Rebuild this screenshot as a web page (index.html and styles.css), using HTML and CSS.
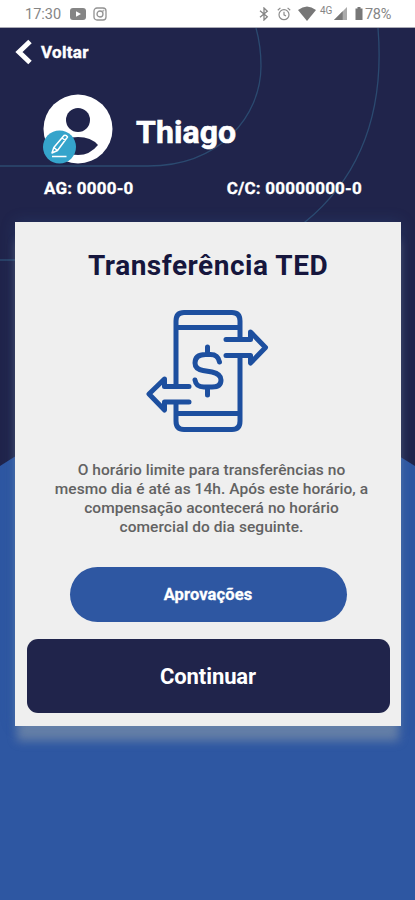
FILE: index.html
```html
<!DOCTYPE html>
<html lang="pt-BR">
<head>
<meta charset="utf-8">
<meta name="viewport" content="width=device-width, initial-scale=1">
<title>Transferência TED</title>
<link rel="stylesheet" href="styles.css">
</head>
<body>
<div class="status">
  <span class="time">17:30</span>
  <svg class="yt" width="16" height="12" viewBox="0 0 16 12"><rect width="16" height="12" rx="3" fill="#858585"/><path d="M6 3.2v5.6L11 6z" fill="#fff"/></svg>
  <svg class="ig" width="14" height="14" viewBox="0 0 14 14" fill="none" stroke="#929292" stroke-width="1.3"><rect x="1" y="1" width="12" height="12" rx="3"/><circle cx="7" cy="7" r="3"/><circle cx="10.4" cy="3.6" r=".3"/></svg>
  <svg class="bt" width="10" height="14" viewBox="0 0 10 14" fill="none" stroke="#858585" stroke-width="1.3"><path d="M1 3.8l7.3 6L5 13V1l3.3 3.2L1 10.2"/></svg>
  <svg class="alarm" width="14" height="14" viewBox="0 0 14 14" fill="none" stroke="#8c8c8c" stroke-width="1.2"><circle cx="7" cy="7.7" r="5"/><path d="M7 4.8v3l2 1.3M.8 3.2l2.6-2.3M13.2 3.2L10.6.9"/></svg>
  <svg class="wifi" width="18" height="15" viewBox="0 0 18 15"><path d="M0 4Q9-3 18 4L9 15z" fill="#777"/></svg>
  <span class="net">4G</span>
  <svg class="signal" width="13" height="13" viewBox="0 0 13 13"><path d="M0 13L13 0v13z" fill="#aaa"/><path d="M0 13L8.700 4.300V13z" fill="#777"/></svg>
  <svg class="battery" width="8" height="13" viewBox="0 0 8 13"><path d="M.5 1.500h2V0h3v1.500h2V13h-7z" fill="#777"/></svg>
  <span class="percent">78%</span>
</div>
<main class="screen">
  <svg class="backdrop" width="415" height="872" viewBox="0 28 415 872">
    <path d="M0 466Q208 330 415 466V900H0z" fill="#2e57a2"/>
    <g fill="none" stroke="#2b4a70" stroke-width="1.300">
      <path d="M0 166H148C220 166 261 116 261 66Q261 46 256 28"/>
      <path d="M0 260H190C240 260 274 248 305 222C360 177 385 114 378 28"/>
    </g>
  </svg>
  <header class="top">
    <a class="back">
      <svg width="18" height="26" viewBox="0 0 18 26"><path d="M16 2.500L5 13L16 23.500" fill="none" stroke="#fff" stroke-width="5"/></svg>
      <span class="back-label">Voltar</span>
    </a>
    <div class="profile">
      <svg class="avatar" width="70" height="71" viewBox="0 0 70 71">
        <circle cx="35" cy="35" r="34.500" fill="#fff"/>
        <circle cx="35" cy="26" r="12" fill="#20244b"/>
        <path d="M15 51Q22 43 35 43Q48 43 55 51Q47 61 35 61Q22 61 15 51z" fill="#20244b"/>
        <circle cx="16.500" cy="53" r="16.500" fill="#35a4cb"/>
        <g fill="none" stroke="#fff" stroke-width="1.500" stroke-linejoin="round"><path d="M9 59l1.800-5.500L21 41.500Q23 40.500 24.500 43L14.500 56.500zM10.800 53.500l3.700 3M19 44l3.500 2.500M9 62.500h14.500"/></g>
      </svg>
      <h1 class="name">Thiago</h1>
    </div>
    <div class="account"><span class="agency">AG: 0000-0</span><span class="number">C/C: 00000000-0</span></div>
  </header>
  <section class="card">
    <h2 class="title">Transferência TED</h2>
    <svg class="transfer" width="124" height="124" viewBox="0 0 124 124" fill="none" stroke="#1d4f9f" stroke-width="5" stroke-linecap="round" stroke-linejoin="round">
      <path d="M31 77V12Q31 3.500 39 3.500H87Q95 3.500 95 12V30M95 48V112Q95 120.500 87 120.500H39Q31 120.500 31 112V95M31 18.500H95M31 104.500H95"/>
      <path d="M81 30.500H105.500V23L120.500 38.500L105.500 54V46.500H81M44 77.500H19.500V70L4 85L19.500 101V93H44"/>
      <path d="M62.500 38V45M62.500 79V86M74.500 53Q73 45.500 65.500 45.500H60.500Q50 45.500 50 54Q50 60 58 61.500L67 63Q76 65 76 71Q76 78 67 78H59Q51 78 50 71" stroke-width="5"/>
    </svg>
    <p class="notice">
      <span class="l1">O horário limite para transferências no</span>
      <span class="l2">mesmo dia é até as 14h. Após este horário, a</span>
      <span class="l3">compensação acontecerá no horário</span>
      <span class="l4">comercial do dia seguinte.</span>
    </p>
    <button class="approve">Aprovações</button>
    <button class="next">Continuar</button>
  </section>
</main>
</body>
</html>
```
FILE: styles.css
```css
* { box-sizing: border-box; }
body { margin: 0; width: 415px; height: 900px; overflow: hidden; font-family: Roboto, "Liberation Sans", sans-serif; background: #20244b; }
h1, h2, p { margin: 0; }
svg { display: block; flex: none; }
.status { display: flex; align-items: center; height: 28px; padding-left: 25px; background: #fff; border-bottom: 1px solid #aaaab5; color: #858585; font-size: 14.5px; line-height: 27px; white-space: nowrap; }
.time { width: 45px; padding-top: 1px; }
.ig { margin-left: 7px; }
.bt { margin-left: 152px; }
.alarm { margin-left: 8px; }
.wifi { margin-left: 7px; }
.net { margin-left: 4px; width: 14px; font-size: 10px; line-height: 10px; align-self: flex-start; margin-top: 6px; }
.battery { margin-left: 8px; }
.percent { margin-left: 2px; padding-top: 1px; letter-spacing: -.3px; }
.screen { position: relative; height: 872px; }
.backdrop { position: absolute; inset: 0; z-index: -1; }
.top { height: 194px; color: #fff; padding-top: 11px; }
.back { display: flex; align-items: center; height: 26px; padding-left: 14px; }
.back-label { margin-left: 9px; font-size: 17px; font-weight: 700; line-height: 26px; letter-spacing: .3px; -webkit-text-stroke: .4px; }
.profile { display: flex; align-items: center; height: 71px; margin: 29px 0 0 43px; }
.name { margin: 4px 0 0 23px; font-size: 32px; font-weight: 700; line-height: 38px; letter-spacing: .1px; -webkit-text-stroke: .6px; }
.account { display: flex; justify-content: space-between; padding: 12px 53px 0 44px; font-size: 17px; line-height: 22px; font-weight: 700; letter-spacing: .22px; -webkit-text-stroke: .3px; }
.card { width: 386px; height: 504px; margin-left: 15px; padding: 27px 12px 0; background: #efefef; box-shadow: 0 17px 9px -2px rgba(180,185,175,.4), 0 0 14px rgba(60,110,175,.22); display: flex; flex-direction: column; align-items: center; }
.title { margin-top: 1px; font-size: 28px; line-height: 32px; font-weight: 700; color: #16163d; white-space: nowrap; letter-spacing: .52px; }
.transfer { margin-top: 27px; margin-left: -2px; }
.notice { margin: 28px 0 0 7px; display: flex; flex-direction: column; align-items: center; color: #626262; font-size: 15.5px; line-height: 19px; font-weight: 500; white-space: nowrap; letter-spacing: .05px; }
.approve { margin-top: 30px; width: 277px; height: 55px; border: 0; border-radius: 28px; color: #fff; background: #2e57a2; font: 700 16.500px Roboto, sans-serif; letter-spacing: .12px; -webkit-text-stroke: .3px; }
.next { margin-top: 17px; width: 363px; height: 74px; padding: 0; flex: none; border: 0; border-radius: 11px; color: #fff; background: #20244b; font: 700 22px Roboto, sans-serif; letter-spacing: -.1px; }
```
